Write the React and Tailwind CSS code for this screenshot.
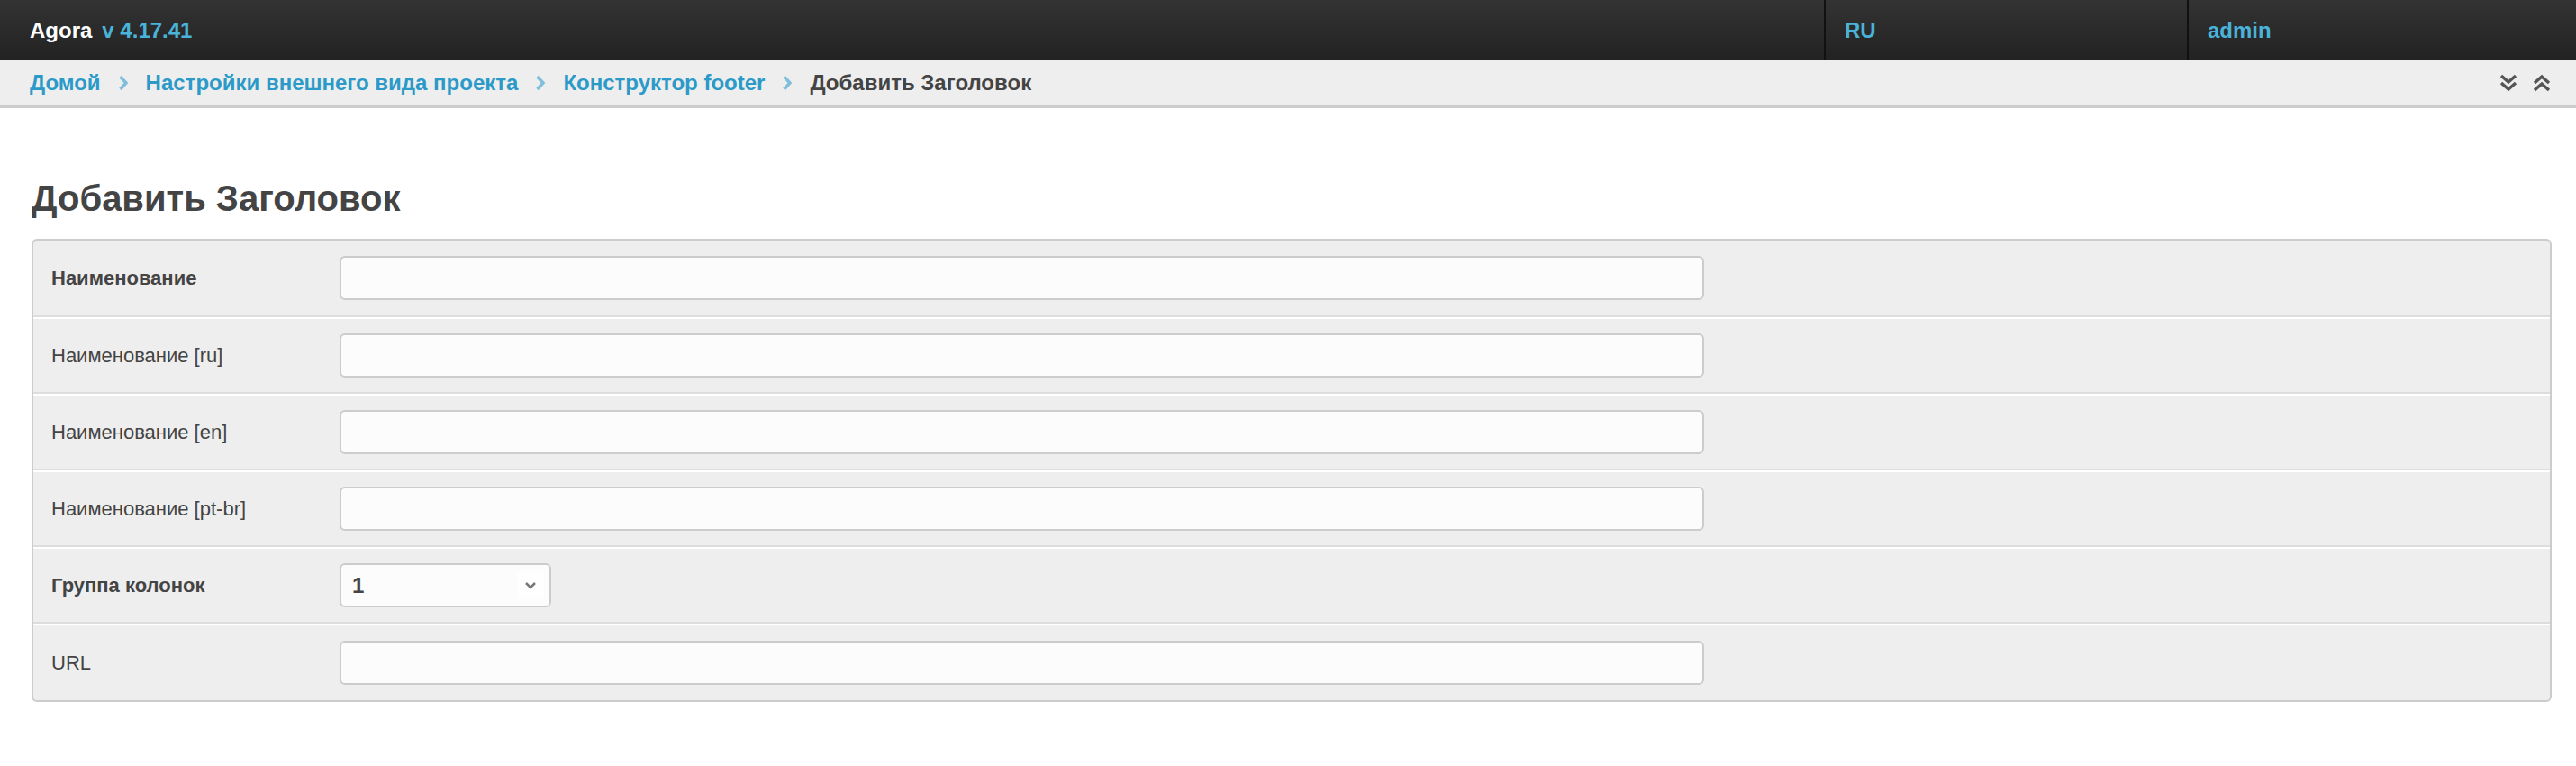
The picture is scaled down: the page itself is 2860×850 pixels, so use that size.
import React from 'react';

const font = { fontFamily: '"Liberation Sans", Arial, Helvetica, sans-serif' };

const Crumb = () => (
  <svg width="12" height="18" viewBox="0 0 12 18" className="mx-[19px]">
    <polyline points="2.5,2 9,9 2.5,16" fill="none" stroke="#7fbfdc" strokeWidth="3.5" />
  </svg>
);

const DoubleDown = () => (
  <svg width="22" height="22" viewBox="0 0 22 22">
    <polyline points="3,3 11,10 19,3" fill="none" stroke="#555" strokeWidth="3.5" />
    <polyline points="3,11 11,18 19,11" fill="none" stroke="#555" strokeWidth="3.5" />
  </svg>
);

const DoubleUp = () => (
  <svg width="22" height="22" viewBox="0 0 22 22">
    <polyline points="3,11 11,4 19,11" fill="none" stroke="#555" strokeWidth="3.5" />
    <polyline points="3,19 11,12 19,19" fill="none" stroke="#555" strokeWidth="3.5" />
  </svg>
);

const rows = [
  { label: 'Наименование', bold: true },
  { label: 'Наименование [ru]' },
  { label: 'Наименование [en]' },
  { label: 'Наименование [pt-br]' },
  { label: 'Группа колонок', bold: true, select: true },
  { label: 'URL' },
];

const App = () => {
  return (
    <div className="w-[2860px] h-[850px] bg-white" style={font}>
      {/* top bar */}
      <div className="h-[67px] flex bg-gradient-to-b from-[#333333] to-[#222222]">
        <div className="flex-1 flex items-center pl-[33px]">
          <span className="text-white font-bold text-[24px]">Agora</span>
          <span className="ml-[11px] text-[#49b3d9] font-bold text-[24px]">v 4.17.41</span>
        </div>
        <div className="w-[403px] flex items-center pl-[21px] border-l-2 border-[#111]">
          <span className="text-[#49b3d9] font-bold text-[24px]">RU</span>
        </div>
        <div className="w-[432px] flex items-center pl-[21px] border-l-2 border-[#111]">
          <span className="text-[#49b3d9] font-bold text-[24px]">admin</span>
        </div>
      </div>

      {/* breadcrumbs */}
      <div className="h-[53px] flex items-center pl-[33px] pr-[27px] bg-[#eeeeee] border-b-[3px] border-[#cccccc]">
        <div className="flex-1 flex items-center text-[24px] font-bold">
          <span className="text-[#2b9ac8]">Домой</span>
          <Crumb />
          <span className="text-[#2b9ac8]">Настройки внешнего вида проекта</span>
          <Crumb />
          <span className="text-[#2b9ac8]">Конструктор footer</span>
          <Crumb />
          <span className="text-[#444]">Добавить Заголовок</span>
        </div>
        <div className="flex items-center gap-[15px]">
          <DoubleDown />
          <DoubleUp />
        </div>
      </div>

      {/* content */}
      <div className="px-[35px] pt-[80px]">
        <h2 className="text-[40px] font-bold text-[#444] leading-none mb-[25px]">Добавить Заголовок</h2>

        <div className="w-[2798px] border-2 border-[#cccccc] rounded-[6px] bg-[#eeeeee] overflow-hidden">
          {rows.map((r, i) => (
            <div
              key={i}
              className={
                'h-[85px] flex items-center ' +
                (i > 0 ? 'border-t-2 border-white ' : '') +
                (i < rows.length - 1 ? 'border-b-2 border-b-[#dddddd]' : '')
              }
            >
              <div className={'w-[340px] pl-[20px] text-[22px] text-[#444] ' + (r.bold ? 'font-bold' : '')}>
                {r.label}
              </div>
              {r.select ? (
                <div className="w-[235px] h-[49px] border-2 border-[#cccccc] rounded-[6px] bg-[#fcfcfc] flex items-center justify-between pl-[12px] pr-[6px]">
                  <span className="text-[24px] font-bold text-[#444]">1</span>
                  <div className="w-[30px] h-[30px] bg-[#fefefe] rounded-[4px] flex items-center justify-center">
                    <svg width="14" height="10" viewBox="0 0 14 10">
                      <polyline points="2,2 7,7 12,2" fill="none" stroke="#777" strokeWidth="2.5" />
                    </svg>
                  </div>
                </div>
              ) : (
                <div className="w-[1515px] h-[49px] border-2 border-[#cccccc] rounded-[6px] bg-[#fcfcfc]" />
              )}
            </div>
          ))}
        </div>
      </div>
    </div>
  );
};

export default App;
